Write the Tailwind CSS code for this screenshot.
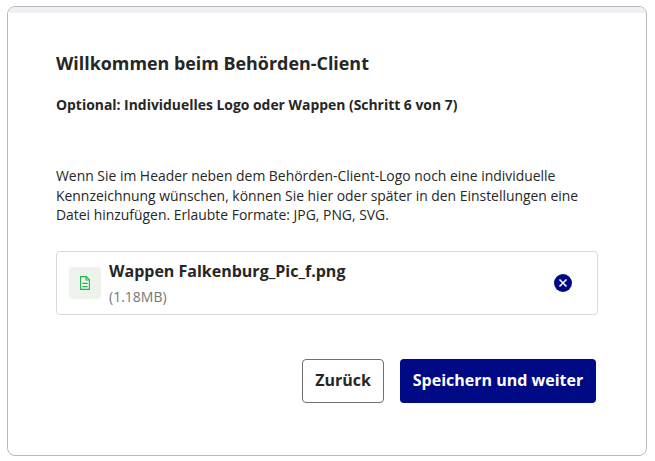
<!DOCTYPE html>
<html lang="de">
<head>
  <meta charset="UTF-8" />
  <title>Willkommen beim Behörden-Client</title>
  <script src="https://cdn.jsdelivr.net/npm/@tailwindcss/browser@4"></script>
</head>
<body class="bg-white font-['Open_Sans',sans-serif] text-[#262626]">
  <div class="pt-[6px] pl-[7px]">
    <!-- Dialog -->
    <div class="w-[640px] h-[450px] border border-[#b8b8b8] rounded-[8px] overflow-hidden">
      <div class="h-[6px] bg-[#f0f0f4]"></div>
      <div class="pl-[48px] pr-[48px]">
        <h1 class="pt-[38px] text-[17.9px] leading-[24px] font-bold">Willkommen beim Behörden-Client</h1>
        <h2 class="mt-[20px] text-[13.92px] leading-[20px] font-bold">Optional: Individuelles Logo oder Wappen (Schritt 6 von 7)</h2>
        <p class="mt-[51px] text-[13.92px] leading-[19.5px] w-[540px]">Wenn Sie im Header neben dem Behörden-Client-Logo noch eine individuelle Kennzeichnung wünschen, können Sie hier oder später in den Einstellungen eine Datei hinzufügen. Erlaubte Formate: JPG, PNG, SVG.</p>

        <!-- Upload row -->
        <div class="mt-[26px] w-[542px] h-[64px] border border-[#d9d9d9] rounded-[4px] flex items-center pl-[12px] pr-[25px]">
          <div class="w-[32px] h-[32px] rounded-[4px] bg-[#edf3ec] flex items-center justify-center">
            <svg width="10" height="14" viewBox="0 0 10 14" fill="none" stroke="#22b14c" stroke-width="1.1">
              <path d="M.6 .6h5.6L9.4 3.8v9.6H.6z" />
              <path d="M6 .6v3.4h3.4M2.4 7.4h5.2M2.4 10.6h5.2" />
            </svg>
          </div>
          <div class="ml-[8px] flex-1">
            <div class="text-[16px] leading-[22px] font-bold">Wappen Falkenburg_Pic_f.png</div>
            <div class="mt-[6px] text-[14px] leading-[18px] text-[#757575]">(1.18MB)</div>
          </div>
          <svg width="18" height="18" viewBox="0 0 18 18">
            <circle cx="9" cy="9" r="9" fill="#000a85" />
            <path d="M5.5 5.5l7 7M12.5 5.5l-7 7" stroke="#fff" stroke-width="1.6" />
          </svg>
        </div>

        <!-- Buttons -->
        <div class="mt-[44px] flex gap-[16px] pl-[246px]">
          <button class="w-[82px] h-[44px] pb-[2px] border border-[#707070] rounded-[4px] bg-white text-[16px] font-bold text-[#262626]">Zurück</button>
          <button class="w-[196px] h-[44px] pb-[2px] rounded-[4px] bg-[#000a85] text-[16px] font-bold text-white">Speichern und weiter</button>
        </div>
      </div>
    </div>
  </div>
</body>
</html>
